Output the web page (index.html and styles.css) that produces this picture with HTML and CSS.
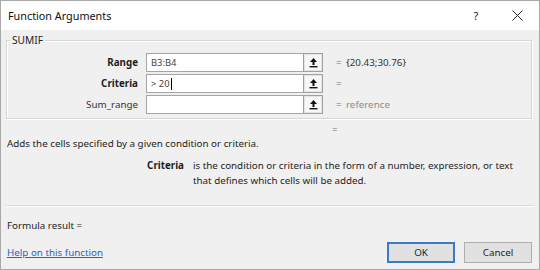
FILE: index.html
```html
<!DOCTYPE html>
<html lang="en">
<head>
  <meta charset="UTF-8" />
  <title>Function Arguments</title>
  <link rel="stylesheet" href="styles.css">
</head>
<body>
  <div class="dialog">
    <!-- Title bar -->
    <div class="titlebar">
      <span class="title">Function Arguments</span>
      <span class="help-btn">?</span>
      <span class="close-btn">
        <svg width="11" height="11" viewBox="0 0 11 11"><path d="M0.5 0.5 L10.5 10.5 M10.5 0.5 L0.5 10.5" stroke="#222" stroke-width="1" fill="none"/></svg>
      </span>
    </div>

    <div class="content">
      <!-- Argument group -->
      <div class="group">
        <span class="group-label">SUMIF</span>

        <div class="arg-row">
          <span class="arg-name required">Range</span>
          <div class="arg-input">
            <span class="arg-text">B3:B4</span>
            <span class="collapse-btn"><svg width="9" height="11" viewBox="0 0 9 11"><path d="M4.5 1 L1 5 H3.5 V8 H5.5 V5 H8 Z" fill="#111"/><rect x="0.5" y="9" width="8" height="1.4" fill="#111"/></svg></span>
          </div>
          <span class="eq">=</span>
          <span class="arg-value">{20.43;30.76}</span>
        </div>

        <div class="arg-row">
          <span class="arg-name required">Criteria</span>
          <div class="arg-input">
            <span class="arg-text">&gt; 20<span class="caret"></span></span>
            <span class="collapse-btn"><svg width="9" height="11" viewBox="0 0 9 11"><path d="M4.5 1 L1 5 H3.5 V8 H5.5 V5 H8 Z" fill="#111"/><rect x="0.5" y="9" width="8" height="1.4" fill="#111"/></svg></span>
          </div>
          <span class="eq">=</span>
          <span class="arg-value"></span>
        </div>

        <div class="arg-row">
          <span class="arg-name">Sum_range</span>
          <div class="arg-input">
            <span class="arg-text"></span>
            <span class="collapse-btn"><svg width="9" height="11" viewBox="0 0 9 11"><path d="M4.5 1 L1 5 H3.5 V8 H5.5 V5 H8 Z" fill="#111"/><rect x="0.5" y="9" width="8" height="1.4" fill="#111"/></svg></span>
          </div>
          <span class="eq">=</span>
          <span class="arg-value muted">reference</span>
        </div>
      </div>

      <div class="result-eq">=</div>
      <div class="summary">Adds the cells specified by a given condition or criteria.</div>

      <div class="arg-help">
        <span class="arg-help-name">Criteria</span>
        <span class="arg-help-text">is the condition or criteria in the form of a number, expression, or text that defines which cells will be added.</span>
      </div>

      <div class="separator"></div>

      <div class="formula-result">Formula result =</div>

      <div class="footer">
        <a class="help-link" href="#">Help on this function</a>
        <div class="buttons">
          <button class="btn primary">OK</button>
          <button class="btn">Cancel</button>
        </div>
      </div>
    </div>
  </div>
</body>
</html>
```

FILE: styles.css
```css
/* ------------------------------
   BASE
------------------------------- */
* {
  margin: 0;
  padding: 0;
  box-sizing: border-box;
}
body {
  width: 540px;
  height: 270px;
  overflow: hidden;
  font-family: 'Noto Sans', 'Open Sans', Arial, sans-serif;
  font-size: 9.8px;
  color: #1e1e1e;
  background: #f0f0f0;
}

.dialog {
  width: 540px;
  height: 270px;
  border: 1px solid #a9a9a9;
  background: #f0f0f0;
  display: flex;
  flex-direction: column;
}

/* ------------------------------
   TITLE BAR
------------------------------- */
.titlebar {
  height: 29px;
  background: #ffffff;
  display: flex;
  align-items: center;
  padding-left: 7px;
}
.title {
  flex: 1;
  font-size: 10.8px;
  color: #111;
}
.help-btn {
  width: 14px;
  text-align: center;
  font-size: 11px;
  color: #222;
  margin-right: 29px;
}
.close-btn {
  display: flex;
  width: 11px;
  margin-right: 16px;
}

/* ------------------------------
   CONTENT
------------------------------- */
.content {
  flex: 1;
  padding: 0 6px 0 5px;
  display: flex;
  flex-direction: column;
}

.group {
  position: relative;
  margin-top: 10px;
  margin-right: 1px;
  border: 1px solid #d6d6d6;
  box-shadow: inset 1px 1px 0 #ffffff, 1px 1px 0 #ffffff;
  padding: 12px 0 4px 0;
  display: flex;
  flex-direction: column;
  gap: 2px;
}
.group-label {
  position: absolute;
  top: -8px;
  left: 3px;
  padding: 0 2px;
  background: #f0f0f0;
  line-height: 15px;
  font-size: 10.2px;
  color: #1e1e1e;
}

.arg-row {
  display: flex;
  align-items: center;
  height: 19px;
}
.arg-name {
  width: 131px;
  text-align: right;
  margin-right: 8px;
  color: #333;
}
.arg-name.required {
  font-weight: 700;
  color: #1e1e1e;
}
.arg-input {
  display: flex;
  height: 19px;
  width: 177px;
}
.arg-text {
  flex: 1;
  height: 19px;
  border: 1px solid #a5a5a5;
  border-right: none;
  background: #ffffff;
  padding-left: 4px;
  line-height: 17px;
  font-size: 9.4px;
  color: #444;
  display: flex;
  align-items: center;
}
.caret {
  display: inline-block;
  width: 1px;
  height: 12px;
  background: #000;
  margin-left: 1px;
}
.collapse-btn {
  width: 20px;
  height: 19px;
  border: 1px solid #a0a0a0;
  outline: 1px solid #e4e4e4;
  outline-offset: -2px;
  background: #f7f7f7;
  display: flex;
  align-items: center;
  justify-content: center;
}
.eq {
  width: 10px;
  margin-left: 13px;
  color: #777;
}
.arg-value {
  color: #333;
}
.arg-value.muted {
  color: #8c8c8c;
}

.result-eq {
  margin-top: 4px;
  height: 14px;
  line-height: 14px;
  padding-left: 326px;
  color: #777;
}
.summary {
  height: 14px;
  line-height: 14px;
  padding-left: 1px;
}

.arg-help {
  margin-top: 7px;
  display: flex;
  line-height: 15px;
}
.arg-help-name {
  width: 178px;
  flex-shrink: 0;
  text-align: right;
  font-weight: 700;
  margin-right: 9px;
}
.arg-help-text {
  max-width: 334px;
}

.separator {
  margin-top: 17px;
  border-top: 1px solid #dadada;
  border-bottom: 1px solid #ffffff;
  margin-right: -1px;
}

.formula-result {
  margin-top: 12px;
  height: 14px;
  line-height: 14px;
  padding-left: 1px;
}

.footer {
  margin-top: 9px;
  display: flex;
  align-items: center;
  justify-content: space-between;
  padding-left: 1px;
  padding-right: 1px;
}
.help-link {
  color: #2f62c0;
  text-decoration: underline;
}
.buttons {
  display: flex;
  gap: 9px;
}
.btn {
  width: 68px;
  height: 21px;
  font-family: inherit;
  font-size: 9.8px;
  color: #1e1e1e;
  background: #e1e1e1;
  border: 1px solid #adadad;
}
.btn.primary {
  border: 2px solid #3a7bc8;
}
```
